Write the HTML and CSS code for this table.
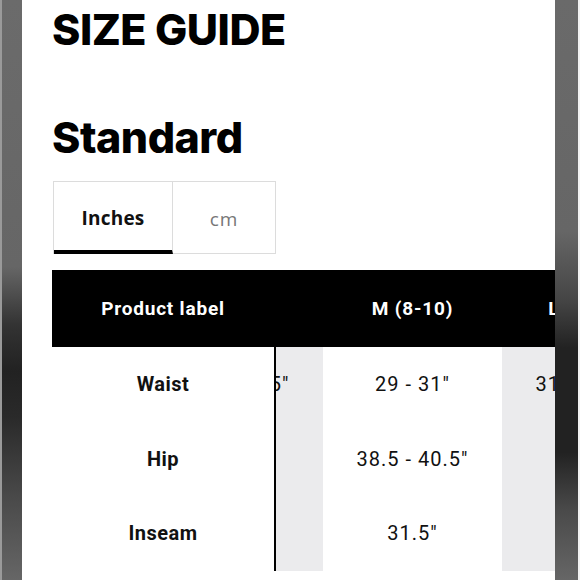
FILE: index.html
```html
<!DOCTYPE html>
<html lang="en">
<head>
<meta charset="utf-8">
<title>Size guide</title>
<link rel="stylesheet" href="styles.css">
</head>
<body>
<div class="frame">
  <div class="edge edge-left"></div>
  <main class="page">
    <h1 class="title">SIZE GUIDE</h1>
    <h2 class="subtitle">Standard</h2>
    <div class="tabs">
      <button class="tab tab-active">Inches</button>
      <button class="tab">cm</button>
    </div>
    <div class="table">
      <div class="col col-fixed">
        <div class="cell head">Product label</div>
        <div class="cell label">Waist</div>
        <div class="cell label">Hip</div>
        <div class="cell label">Inseam</div>
      </div>
      <div class="scroll">
        <div class="track">
          <div class="col col-shade">
            <div class="cell head">S (4-6)</div>
            <div class="cell value">26.5 - 28.5&Prime;</div>
            <div class="cell value">36&Prime;</div>
            <div class="cell value">31&Prime;</div>
          </div>
          <div class="col">
            <div class="cell head">M (8-10)</div>
            <div class="cell value">29 - 31&Prime;</div>
            <div class="cell value">38.5 - 40.5&Prime;</div>
            <div class="cell value">31.5&Prime;</div>
          </div>
          <div class="col col-shade">
            <div class="cell head">L (12-14)</div>
            <div class="cell value">31.5 - 34.5&Prime;</div>
            <div class="cell value">43&Prime;</div>
            <div class="cell value">32&Prime;</div>
          </div>
        </div>
      </div>
    </div>
  </main>
  <div class="edge edge-right"></div>
</div>
</body>
</html>
```
FILE: styles.css
```css
* { box-sizing: border-box; }
html, body { margin: 0; padding: 0; background: #fff; }
body { width: 580px; height: 580px; overflow: hidden; }

.frame {
  display: flex;
  width: 580px;
  height: 580px;
}

.edge {
  flex: none;
  height: 580px;
}
.edge-left {
  width: 22px;
  border-left: 2px solid #9a9a9a;
  background: linear-gradient(to bottom, #6b6b6b 0%, #666 46%, #333 56%, #222 64%, #2a2a2a 72%, #4a4a4a 86%, #666 100%);
}
.edge-right {
  width: 25px;
  border-right: 2px solid #f2f2f2;
  background: linear-gradient(to bottom, #6a6a6a 0%, #666 40%, #444 52%, #222 60%, #222 78%, #4a4a4a 88%, #666 100%);
}

.page {
  flex: 1;
  min-width: 0;
  padding-left: 30px;
  overflow: hidden;
}

.title {
  margin: 7px 0 0;
  font-family: Inter, "Liberation Sans", sans-serif;
  font-weight: 800;
  font-size: 43px;
  line-height: 44px;
  letter-spacing: -0.5px;
  color: #000;
}

.subtitle {
  margin: 64px 0 0;
  font-family: Inter, "Liberation Sans", sans-serif;
  font-weight: 800;
  font-size: 43px;
  line-height: 44px;
  letter-spacing: -0.5px;
  color: #000;
}

.tabs {
  display: flex;
  margin-top: 22px;
  margin-left: 1px;
  width: 223px;
  height: 73px;
  border: 1px solid #dcdcdc;
  border-bottom: none;
}
.tab {
  appearance: none;
  background: #fff;
  border: none;
  padding: 3px 0 0;
  margin: 0;
  font-family: "Open Sans", "Noto Sans", sans-serif;
  font-size: 19px;
  color: #777;
  letter-spacing: 1px;
  border-bottom: 1px solid #dcdcdc;
}
.tab:first-child {
  width: 119px;
  border-right: 1px solid #dcdcdc;
}
.tab:last-child {
  flex: 1;
}
.tab-active {
  color: #111;
  font-weight: 700;
  letter-spacing: 0.2px;
  border-bottom: 4px solid #000;
}

.table {
  display: flex;
  margin-top: 16px;
  height: 301px;
}

.col {
  flex: none;
  width: 179px;
  display: flex;
  flex-direction: column;
  background: #fff;
}
.col-fixed {
  width: 224px;
  border-right: 2px solid #000;
}
.col-shade {
  background: #ebebed;
}

.scroll {
  flex: 1;
  min-width: 0;
  overflow: hidden;
}
.track {
  display: flex;
  margin-left: -132px;
}

.cell {
  display: flex;
  align-items: center;
  justify-content: center;
  height: 74.5px;
  font-family: Roboto, "Liberation Sans", sans-serif;
  font-size: 20px;
  color: #111;
  white-space: nowrap;
}
.cell.head {
  height: 77px;
  background: #000;
  color: #fff;
  font-weight: 700;
  font-size: 19px;
  letter-spacing: 0.8px;
}
.cell.label {
  font-weight: 700;
  font-size: 20px;
  letter-spacing: 0.5px;
}
.cell.value {
  font-weight: 400;
  font-size: 20px;
  letter-spacing: 1px;
}
```
